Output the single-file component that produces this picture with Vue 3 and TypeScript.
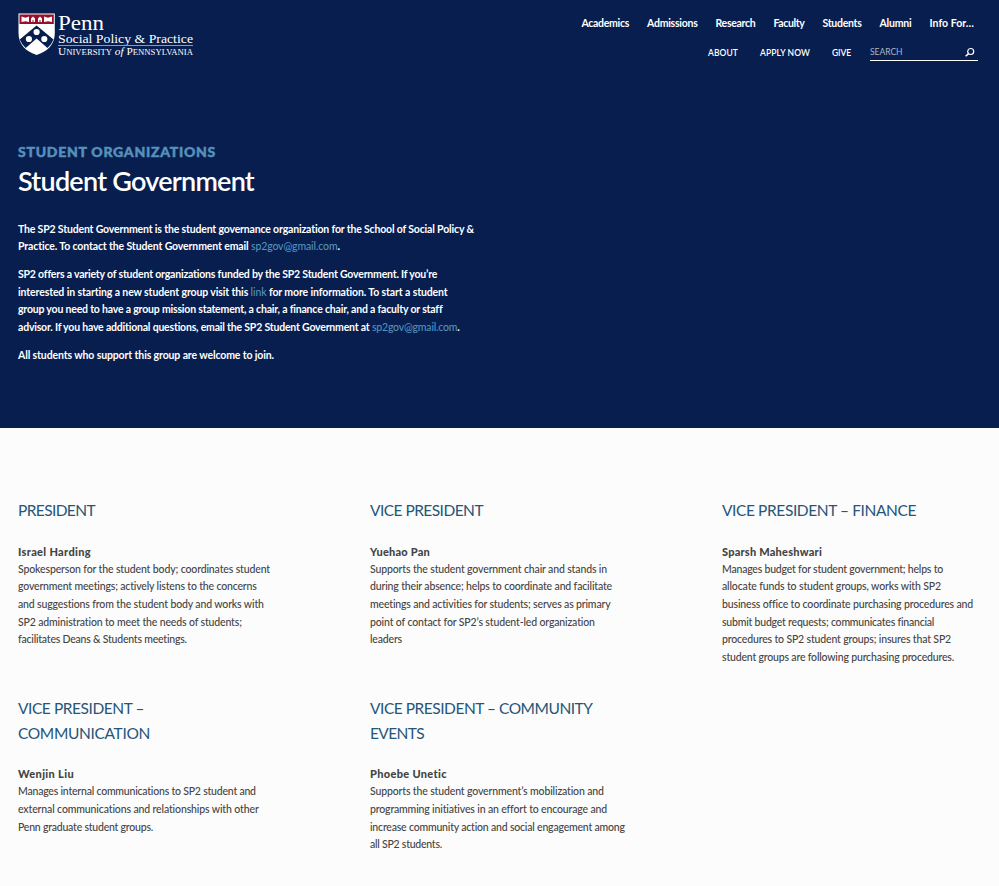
<script setup lang="ts">
interface Part { t: string; link?: boolean }
interface Line { w: number; parts: Part[] }
interface Role { title: Line[]; name: Line; text: Line[] }

const ln = (t: string, w: number): Line => ({ w, parts: [{ t }] })

// Tracks a line of text so that it fills its set measure.
const vFit = {
  mounted(el: HTMLElement, binding: { value: number }) {
    const count = Array.from(el.textContent ?? '').length
    const natural = el.getBoundingClientRect().width
    el.style.letterSpacing = `${(binding.value - natural) / count}px`
  },
}

const nav: Line[] = [
  ln('Academics', 47.5), ln('Admissions', 50.5), ln('Research', 40), ln('Faculty', 31),
  ln('Students', 39), ln('Alumni', 32), ln('Info For…', 44.5),
]
const subnav: Line[] = [ln('ABOUT', 30), ln('APPLY NOW', 50), ln('GIVE', 19)]

const intro: Line[][] = [
  [
    ln('The SP2 Student Government is the student governance organization for the School of Social Policy &', 456),
    { w: 322, parts: [{ t: 'Practice. To contact the Student Government email ' }, { t: 'sp2gov@gmail.com', link: true }, { t: '.' }] },
  ],
  [
    ln('SP2 offers a variety of student organizations funded by the SP2 Student Government. If you’re', 419),
    { w: 430, parts: [{ t: 'interested in starting a new student group visit this ' }, { t: 'link', link: true }, { t: ' for more information. To start a student' }] },
    ln('group you need to have a group mission statement, a chair, a finance chair, and a faculty or staff', 424),
    { w: 442, parts: [{ t: 'advisor. If you have additional questions, email the SP2 Student Government at ' }, { t: 'sp2gov@gmail.com', link: true }, { t: '.' }] },
  ],
  [ln('All students who support this group are welcome to join.', 256)],
]

const roles: Role[] = [
  {
    title: [ln('PRESIDENT', 77)],
    name: ln('Israel Harding', 73),
    text: [
      ln('Spokesperson for the student body; coordinates student', 252),
      ln('government meetings; actively listens to the concerns', 239),
      ln('and suggestions from the student body and works with', 246),
      ln('SP2 administration to meet the needs of students;', 224),
      ln('facilitates Deans & Students meetings.', 169),
    ],
  },
  {
    title: [ln('VICE PRESIDENT', 113)],
    name: ln('Yuehao Pan', 60),
    text: [
      ln('Supports the student government chair and stands in', 237),
      ln('during their absence; helps to coordinate and facilitate', 242),
      ln('meetings and activities for students; serves as primary', 241),
      ln('point of contact for SP2’s student-led organization', 225),
      ln('leaders', 32),
    ],
  },
  {
    title: [ln('VICE PRESIDENT – FINANCE', 194)],
    name: ln('Sparsh Maheshwari', 100),
    text: [
      ln('Manages budget for student government; helps to', 221),
      ln('allocate funds to student groups, works with SP2', 219),
      ln('business office to coordinate purchasing procedures and', 250.5),
      ln('submit budget requests; communicates financial', 212),
      ln('procedures to SP2 student groups; insures that SP2', 229),
      ln('student groups are following purchasing procedures.', 232),
    ],
  },
  {
    title: [ln('VICE PRESIDENT –', 126), ln('COMMUNICATION', 132)],
    name: ln('Wenjin Liu', 56),
    text: [
      ln('Manages internal communications to SP2 student and', 238),
      ln('external communications and relationships with other', 241),
      ln('Penn graduate student groups.', 135),
    ],
  },
  {
    title: [ln('VICE PRESIDENT – COMMUNITY', 222.5), ln('EVENTS', 54)],
    name: ln('Phoebe Unetic', 77),
    text: [
      ln('Supports the student government’s mobilization and', 234),
      ln('programming initiatives in an effort to encourage and', 237),
      ln('increase community action and social engagement among', 255),
      ln('all SP2 students.', 72),
    ],
  },
]
</script>

<template>
  <div class="page">
    <section class="hero">
      <header class="header">
        <a class="logo">
          <svg width="180" height="46" viewBox="0 0 180 46">
            <path d="M.5 .5H36.800V20C36.800 32 29 38.500 18.600 42C8.300 38.500 .5 32 .5 20Z" fill="#fff" />
            <path d="M1.500 1.500H35.800V11H1.500Z" fill="#980f2c" />
            <path d="M3.500 3.500l4 1.200L11 3.500v5.500L7.500 8.200 3.500 9ZM26 3.500l4 1.200L34 3.500v5.500l-4-.8-4 .8ZM13 9V5.500l2-2 2 2v3.500h-1.500V7h-1v2ZM20 9V5.500l2-2 2 2v3.500h-1.500V7h-1v2Z" fill="#fff" />
            <path d="M18.600 12.500L35.500 26.500Q33.500 31.500 29.500 35L18.600 25.500 7.700 35Q3.700 31.500 1.700 26.500Z" fill="#071e4f" />
            <circle cx="18.600" cy="19" r="3.100" fill="#fff" />
            <circle cx="10.900" cy="26" r="3.100" fill="#fff" />
            <circle cx="26.300" cy="26" r="3.100" fill="#fff" />
            <g fill="#fff" class="logo-text">
              <text x="40" y="17" font-size="20" textLength="46" lengthAdjust="spacingAndGlyphs">Penn</text>
              <text x="40" y="29.500" font-size="12.500" textLength="135" lengthAdjust="spacingAndGlyphs">Social Policy &amp; Practice</text>
              <text x="40" y="42" font-size="10.500" textLength="135" lengthAdjust="spacingAndGlyphs">U<tspan font-size="8">NIVERSITY</tspan> <tspan font-style="italic">of</tspan> P<tspan font-size="8">ENNSYLVANIA</tspan></text>
            </g>
            <path d="M40 32.500H175" stroke="#8c99b5" />
          </svg>
        </a>
        <div class="menus">
          <nav class="nav">
            <a v-for="n in nav" :key="n.parts[0].t" v-fit="n.w">{{ n.parts[0].t }}</a>
          </nav>
          <div class="sub">
            <a v-for="n in subnav" :key="n.parts[0].t" v-fit="n.w">{{ n.parts[0].t }}</a>
            <div class="search">
              <span v-fit="32.5">SEARCH</span>
              <svg width="11" height="11" viewBox="0 0 11 11" fill="none" stroke="#fff">
                <circle cx="6.700" cy="4.500" r="3" stroke-width="1.200" />
                <path d="M4.600 6.600L1.600 9.300" stroke-width="1.500" />
              </svg>
            </div>
          </div>
        </div>
      </header>
      <div class="intro">
        <p class="eyebrow"><span v-fit="198" class="line">STUDENT ORGANIZATIONS</span></p>
        <h1><span v-fit="236" class="line">Student Government</span></h1>
        <p v-for="(para, i) in intro" :key="i" class="para">
          <span v-for="(l, j) in para" :key="j" class="row"><span v-fit="l.w" class="line"><template v-for="(p, k) in l.parts" :key="k"><a v-if="p.link" class="link">{{ p.t }}</a><template v-else>{{ p.t }}</template></template></span></span>
        </p>
      </div>
    </section>
    <main class="roles">
      <article v-for="(r, i) in roles" :key="i">
        <h2><span v-for="(l, j) in r.title" :key="j" class="row"><span v-fit="l.w" class="line">{{ l.parts[0].t }}</span></span></h2>
        <div class="name"><span v-fit="r.name.w" class="line">{{ r.name.parts[0].t }}</span></div>
        <div class="text"><span v-for="(l, j) in r.text" :key="j" class="row"><span v-fit="l.w" class="line">{{ l.parts[0].t }}</span></span></div>
      </article>
    </main>
  </div>
</template>

<style>
body { margin: 0; background: #fcfcfc; }
</style>

<style scoped>
.page { height: 886px; overflow: hidden; font-family: Lato, "Liberation Sans", sans-serif; font-size: 10.5px; line-height: 17.6px; color: #444; }
.hero { box-sizing: border-box; height: 428px; background: #071e4f; color: #fff; padding: 13px 21px 0 18px; }
.header { display: flex; justify-content: space-between; height: 130px; }
.logo svg { display: block; }
.logo-text { font-family: "Liberation Serif", serif; }
.menus { display: flex; flex-direction: column; align-items: flex-end; }
.nav { display: flex; gap: 18px; padding: 2px 4px 0 0; font-weight: 700; white-space: nowrap; }
.nav a, .sub > a { display: block; }
.sub { display: flex; align-items: flex-start; gap: 22px; margin-top: 12px; font-size: 8.5px; font-weight: 600; line-height: 16px; white-space: nowrap; }
.sub > a { padding-top: 0.5px; }
.search { box-sizing: border-box; display: flex; justify-content: space-between; align-items: center; width: 108px; height: 16px; margin-left: -3px; padding-right: 3px; border-bottom: 1px solid #fff; color: #b0b6c5; font-weight: 400; }
.row { display: block; white-space: pre; }
.line { display: inline-block; white-space: pre; vertical-align: top; }
.eyebrow { margin: 0 0 1px; font-size: 14px; line-height: 18px; font-weight: 900; color: #5690bb; -webkit-text-stroke: 0.5px #5690bb; }
h1 { margin: 0 0 20.5px; font-size: 27px; line-height: 38px; font-weight: 600; }
.para { margin: 0 0 9.8px; line-height: 17.75px; font-weight: 700; }
.link { color: #5690bb; font-weight: 500; }
.roles { display: grid; grid-template-columns: repeat(3, 352px); row-gap: 29.1px; padding: 70px 0 0 18px; }
h2 { margin: 0 0 19.5px; font-size: 15.5px; line-height: 25px; font-weight: 400; color: #265578; }
.name { font-weight: 900; font-size: 11px; }
.text { padding-top: 0.8px; font-weight: 500; }
</style>
